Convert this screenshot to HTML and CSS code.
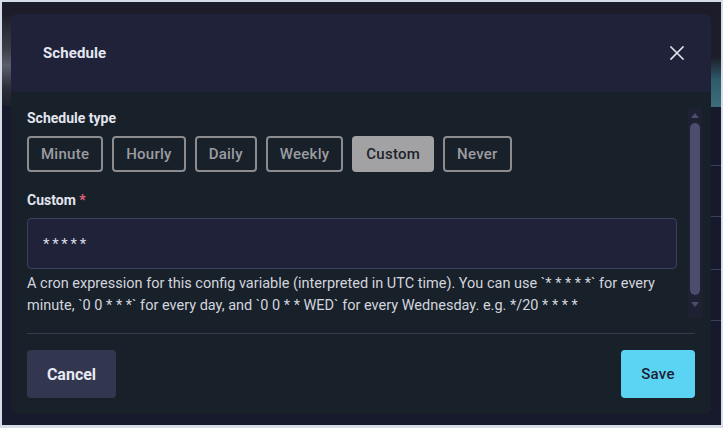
FILE: index.html
```html
<!DOCTYPE html>
<html>
<head>
<meta charset="utf-8">
<link rel="stylesheet" href="styles.css">
</head>
<body>
<div class="frame">
  <div class="bg-top"></div>
  <div class="bg-left"></div>
  <div class="bg-teal"></div>
  <div class="bg-line l1"></div>
  <div class="bg-line l2"></div>
  <div class="bg-line l3"></div>
  <div class="bg-line l4"></div>
  <div class="bg-arc a1"></div>
  <div class="bg-arc a2"></div>

  <div class="modal">
    <div class="header">
      <h2 class="title">Schedule</h2>
      <button class="close" aria-label="Close">
        <svg width="16" height="16" viewBox="0 0 16 16"><path d="M2 2 L14 14 M14 2 L2 14" stroke="#dfe2ec" stroke-width="1.6" stroke-linecap="square" fill="none"/></svg>
      </button>
    </div>
    <div class="body">
      <div class="content">
        <div class="label">Schedule type</div>
        <div class="types">
          <button class="type">Minute</button>
          <button class="type">Hourly</button>
          <button class="type">Daily</button>
          <button class="type">Weekly</button>
          <button class="type active">Custom</button>
          <button class="type">Never</button>
        </div>
        <div class="label custom-label">Custom <span class="req">*</span></div>
        <div class="input">* * * * *</div>
        <p class="help">A cron expression for this config variable (interpreted in UTC time). You can use `* * * * *` for every minute, `0 0 * * *` for every day, and `0 0 * * WED` for every Wednesday. e.g. */20 * * * *</p>
      </div>
      <div class="scrollbar">
        <div class="arrow up"></div>
        <div class="thumb"></div>
        <div class="arrow down"></div>
      </div>
    </div>
    <div class="footer">
      <button class="btn cancel">Cancel</button>
      <button class="btn save">Save</button>
    </div>
  </div>
</div>
</body>
</html>
```

FILE: styles.css
```css
html { background: #d6dde8; }
body {
  margin: 0;
  font-family: Roboto, "Liberation Sans", sans-serif;
}
.frame {
  position: relative;
  margin: 2px 2px 0 2px;
  width: 719px;
  height: 423px;
  background: #171a2c;
  overflow: hidden;
  padding: 12px 0 0 9px;
  box-sizing: border-box;
}
.bg-top {
  position: absolute; left: 0; top: 0; width: 100%; height: 103px;
  background: #1c1d29;
}
.bg-left {
  position: absolute; left: 0; top: 14px; width: 9px; height: 90px;
  background: linear-gradient(180deg, #1e1f2a 0%, #3a3c48 35%, #5a5e6a 55%, #2c2e3a 80%, #1e1f2a 100%);
}
.bg-teal {
  position: absolute; right: 0; top: 55px; width: 10px; height: 50px;
  background: linear-gradient(180deg, #1c1d29 0%, #2e5a6a 45%, #3d6e7c 100%);
}
.bg-line { position: absolute; right: 0; width: 10px; height: 1px; background: #3b4058; }
.l1 { top: 163px; } .l2 { top: 214px; } .l3 { top: 267px; } .l4 { top: 318px; }
.bg-arc {
  position: absolute; right: 1px; width: 12px; height: 14px;
  border: 2px solid #e2747e; border-radius: 50%;
  border-left-color: transparent; border-top-color: transparent; border-bottom-color: transparent;
  box-sizing: border-box;
  transform: translateX(4px);
}
.a1 { top: 181px; } .a2 { top: 284px; }

.modal {
  position: relative;
  width: 700px;
  height: 400px;
  background: #18202a;
  border-radius: 6px;
  overflow: hidden;
  display: flex;
  flex-direction: column;
}
.header {
  height: 78px;
  background: #1f2239;
  display: flex;
  align-items: center;
  justify-content: space-between;
  padding: 0 26px 0 32px;
  flex-shrink: 0;
}
.title {
  margin: 0;
  font-size: 15px;
  font-weight: 700;
  color: #e4e7f1;
  letter-spacing: 0.1px;
}
.close {
  background: none; border: 0; padding: 0; width: 16px; height: 16px;
  display: flex; cursor: pointer;
}
.body {
  display: flex;
  padding: 16px 9px 0 16px;
  height: 226px;
  box-sizing: border-box;
}
.content { width: 650px; }
.label {
  font-size: 14px;
  font-weight: 700;
  color: #e2e5ee;
  line-height: 18px;
  margin-top: 1px;
}
.types {
  display: flex;
  gap: 9px;
  margin-top: 9px;
}
.type {
  height: 36px;
  padding: 0 12px;
  border: 2px solid #8c8c8f;
  border-radius: 4px;
  background: transparent;
  color: #9c9ca0;
  font-family: Roboto, "Liberation Sans", sans-serif;
  font-size: 15px;
  font-weight: 500;
  letter-spacing: 0.25px;
}
.type.active {
  background: #a2a2a4;
  border-color: #a2a2a4;
  color: #20232c;
}
.custom-label { margin-top: 19px; }
.req { color: #e0647c; font-weight: 700; }
.input {
  margin-top: 9px;
  height: 51px;
  box-sizing: border-box;
  background: #1f2239;
  border: 1px solid #3c4160;
  border-radius: 4px;
  padding: 0 15px;
  display: flex;
  align-items: center;
  color: #d8dbe5;
  font-size: 15px;
  letter-spacing: 0.5px;
  word-spacing: -2px;
}
.help {
  margin: 4px 0 0 0;
  font-size: 14.5px;
  line-height: 22px;
  color: #d2d5de;
}
.scrollbar {
  margin-left: 11px;
  width: 14px;
  height: 210px;
  background: #1d2131;
  display: flex;
  flex-direction: column;
  align-items: center;
}
.arrow { width: 0; height: 0; border-left: 4px solid transparent; border-right: 4px solid transparent; }
.arrow.up { border-bottom: 5px solid #4a4d6c; margin-top: 5px; }
.arrow.down { border-top: 5px solid #4a4d6c; margin-top: 7px; }
.thumb {
  width: 10px;
  height: 172px;
  margin-top: 5px;
  background: #4a4d6e;
  border-radius: 5px;
}
.footer {
  margin: 15px 16px 0 16px;
  border-top: 1px solid #343c4a;
  padding-top: 16px;
  display: flex;
  justify-content: space-between;
}
.btn {
  height: 48px;
  border: 0;
  border-radius: 4px;
  font-family: Roboto, "Liberation Sans", sans-serif;
  font-size: 15px;
  padding: 0;
}
.cancel {
  width: 89px;
  background: #33364f;
  color: #e6e9f2;
  font-weight: 700;
  font-size: 16px;
}
.save {
  width: 74px;
  background: #5bd4f4;
  color: #1b2233;
  font-weight: 500;
  letter-spacing: 0.3px;
}
```
